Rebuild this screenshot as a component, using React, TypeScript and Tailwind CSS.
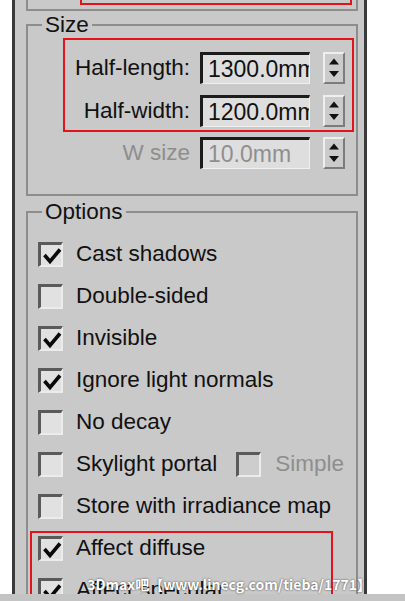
import React from "react";

function Spinner() {
  return (
    <div className="w-[22px] h-[32px] shrink-0 bg-[#cbcbcb] border-t-2 border-l-2 border-b-2 border-r-2 border-t-[#efefef] border-l-[#efefef] border-b-[#7c7c7c] border-r-[#7c7c7c] flex items-center justify-center">
      <svg width="18" height="28" viewBox="0 0 18 28">
        <polygon points="4,10.5 14,10.5 9,4.5" fill="#111" />
        <polygon points="4,17 14,17 9,23" fill="#111" />
      </svg>
    </div>
  );
}

function NumRow({
  label,
  value,
  disabled,
}: {
  label: string;
  value: string;
  disabled?: boolean;
}) {
  return (
    <div className="flex items-center h-[32px]">
      <div
        className={`w-[125px] shrink-0 text-right text-[22.5px] leading-[30px] whitespace-nowrap ${
          disabled ? "text-[#8e8e8e]" : "text-[#111]"
        }`}
      >
        {label}
      </div>
      <div
        className={`ml-[10px] w-[110px] h-[32px] shrink-0 overflow-hidden whitespace-nowrap bg-[#dedede] border-t-[3px] border-l-[3px] border-b border-r border-t-[#1c1c1c] border-l-[#1c1c1c] border-b-[#f0f0f0] border-r-[#f0f0f0] pl-[5px] text-[23px] leading-[28px] ${
          disabled ? "text-[#8e8e8e]" : "text-[#111]"
        }`}
      >
        {value}
      </div>
      <div className="ml-[13px]">
        <Spinner />
      </div>
    </div>
  );
}

function Check({ checked, disabled }: { checked?: boolean; disabled?: boolean }) {
  return (
    <div
      className={`w-[25px] h-[25px] shrink-0 border-t-[3px] border-l-[3px] border-b-2 border-r-2 border-t-[#5a5a5a] border-l-[#5a5a5a] border-b-[#ececec] border-r-[#ececec] ${
        disabled ? "bg-[#cdcdcd]" : "bg-[#e1e1e1]"
      }`}
    >
      {checked && (
        <svg width="20" height="20" viewBox="0 0 20 20" className="overflow-visible">
          <path
            d="M3.5 10 L9 16.5 L19 4.5"
            fill="none"
            stroke="#0a0a0a"
            strokeWidth="3.6"
            strokeLinejoin="miter"
          />
        </svg>
      )}
    </div>
  );
}

function CheckRow({
  label,
  checked,
  children,
}: {
  label: string;
  checked?: boolean;
  children?: React.ReactNode;
}) {
  return (
    <div className="flex items-center h-[42px] pl-[10px]">
      <Check checked={checked} />
      <span className="ml-[13px] text-[22.5px] leading-[30px] whitespace-nowrap text-[#111]">
        {label}
      </span>
      {children}
    </div>
  );
}

export default function App() {
  return (
    <div className="relative w-[405px] h-[601px] bg-white overflow-hidden font-['Liberation_Sans',Arial,sans-serif]">
      <div className="ml-[12px] w-[355px] h-[594px] bg-[#c9c9c9] border-x-[3px] border-[#3a3a3a] overflow-hidden pl-[11px] pr-[6px]">
        {/* remnant of the group above */}
        <div className="h-[11px] border-x-2 border-b-2 border-[#8d8d8d] flex justify-end pr-[4px]">
          <div className="w-[272px] h-[5px] border-x-2 border-b-2 border-[#e3131b]" />
        </div>

        {/* Size */}
        <fieldset className="-mt-[1px] border-2 border-[#8d8d8d] pb-[25px]">
          <legend className="ml-[14px] px-[3px] text-[22.5px] leading-[30px] text-[#111]">
            Size
          </legend>
          <div className="-mt-[2px] ml-[35px] mr-[2px] border-2 border-[#e3131b] pt-[12px] pb-[3px] flex flex-col gap-[11px]">
            <NumRow label="Half-length:" value="1300.0mm" />
            <NumRow label="Half-width:" value="1200.0mm" />
          </div>
          <div className="ml-[37px] mt-[5px]">
            <NumRow label="W size" value="10.0mm" disabled />
          </div>
        </fieldset>

        {/* Options */}
        <fieldset className="mt-[1px] border-2 border-[#8d8d8d] pt-[6px] pb-[20px]">
          <legend className="ml-[14px] px-[3px] text-[22.5px] leading-[30px] text-[#111]">
            Options
          </legend>
          <CheckRow label="Cast shadows" checked />
          <CheckRow label="Double-sided" />
          <CheckRow label="Invisible" checked />
          <CheckRow label="Ignore light normals" checked />
          <CheckRow label="No decay" />
          <CheckRow label="Skylight portal">
            <div className="ml-[19px] flex items-center">
              <Check disabled />
              <span className="ml-[14px] text-[22.5px] leading-[30px] whitespace-nowrap text-[#8e8e8e]">
                Simple
              </span>
            </div>
          </CheckRow>
          <CheckRow label="Store with irradiance map" />
          <div className="mt-[4px] ml-[2px] w-[303px] border-2 border-[#e3131b] pl-[6px]">
            <div className="flex items-center h-[30px]">
              <Check checked />
              <span className="ml-[13px] text-[22.5px] leading-[30px] whitespace-nowrap text-[#111]">
                Affect diffuse
              </span>
            </div>
            <div className="mt-[12px] flex items-center h-[30px]">
              <Check checked />
              <span className="ml-[13px] text-[22.5px] leading-[30px] whitespace-nowrap text-[#111]">
                Affect specular
              </span>
            </div>
          </div>
        </fieldset>
      </div>
      <div className="h-[7px] bg-[#c4c4c4]" />

      <div className="absolute right-[34px] bottom-[8px] text-[14px] leading-[18px] font-bold text-white whitespace-nowrap font-['Noto_Sans_CJK_SC','Noto_Sans',sans-serif] [text-shadow:0_0_2px_rgba(0,0,0,0.75)]">
        3Dmax吧【www.linecg.com/tieba/1771】
      </div>
    </div>
  );
}
